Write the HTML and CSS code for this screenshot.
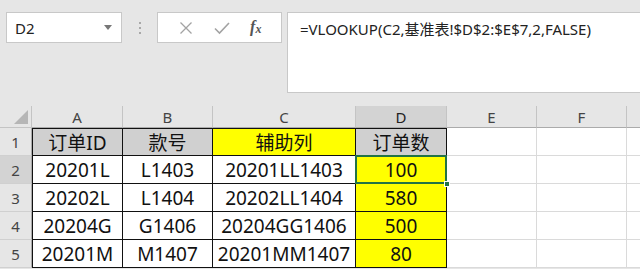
FILE: index.html
```html
<!DOCTYPE html>
<html lang="zh">
<head>
<meta charset="utf-8">
<link rel="stylesheet" href="styles.css">
</head>
<body>
<div class="toolbar">
  <div class="namebox"><span class="ref">D2</span><span class="caret"></span></div>
  <div class="dots"><span></span><span></span><span></span></div>
  <div class="buttons">
    <svg class="ic" width="16" height="16" viewBox="0 0 16 16"><path d="M2.5 2.5 L13.5 13.5 M13.5 2.5 L2.5 13.5" stroke="#a3a3a3" stroke-width="1.3" fill="none"/></svg>
    <svg class="ic" width="18" height="16" viewBox="0 0 18 16"><path d="M2 8.5 L6.5 13 L16 3" stroke="#a3a3a3" stroke-width="1.6" fill="none"/></svg>
    <span class="fx">f<sub>x</sub></span>
  </div>
  <div class="formula">=VLOOKUP(C2,基准表!$D$2:$E$7,2,FALSE)</div>
</div>
<div class="sheet">
  <div class="corner"><span class="tri"></span></div>
  <div class="ch">A</div><div class="ch">B</div><div class="ch">C</div><div class="ch sel">D</div><div class="ch">E</div><div class="ch">F</div><div class="ch last"></div>

  <div class="rh">1</div>
  <div class="c t top left gray">订单ID</div><div class="c t top gray">款号</div><div class="c t top yel">辅助列</div><div class="c t top gray">订单数</div><div class="c"></div><div class="c"></div><div class="c last"></div>

  <div class="rh selr">2</div>
  <div class="c t left">20201L</div><div class="c t">L1403</div><div class="c t">20201LL1403</div><div class="c t yel active">100<span class="frame"></span><span class="handle"></span></div><div class="c"></div><div class="c"></div><div class="c last"></div>

  <div class="rh">3</div>
  <div class="c t left">20202L</div><div class="c t">L1404</div><div class="c t">20202LL1404</div><div class="c t yel">580</div><div class="c"></div><div class="c"></div><div class="c last"></div>

  <div class="rh">4</div>
  <div class="c t left">20204G</div><div class="c t">G1406</div><div class="c t">20204GG1406</div><div class="c t yel">500</div><div class="c"></div><div class="c"></div><div class="c last"></div>

  <div class="rh">5</div>
  <div class="c t left">20201M</div><div class="c t">M1407</div><div class="c t">20201MM1407</div><div class="c t yel">80</div><div class="c"></div><div class="c"></div><div class="c last"></div>
</div>
</body>
</html>
```

FILE: styles.css
```css
* { box-sizing: border-box; }
html, body { margin: 0; padding: 0; }
body {
  width: 640px;
  height: 269px;
  overflow: hidden;
  background: #e6e6e6;
  font-family: "Noto Sans", "Noto Sans CJK SC", sans-serif;
}
.toolbar {
  height: 106px;
  display: flex;
  align-items: flex-start;
  padding: 12px 0 0 6px;
}
.namebox {
  width: 116px;
  height: 31px;
  background: #fff;
  border: 1px solid #c8c8c8;
  display: flex;
  align-items: center;
  justify-content: space-between;
  padding: 0 8px 0 8px;
}
.ref { font-size: 15px; color: #222; }
.caret {
  width: 0; height: 0;
  border-left: 4px solid transparent;
  border-right: 4px solid transparent;
  border-top: 5px solid #777;
  margin-right: 1px;
}
.dots {
  width: 35px;
  height: 31px;
  display: flex;
  flex-direction: column;
  align-items: center;
  justify-content: center;
  gap: 3px;
}
.dots span { width: 2px; height: 2px; background: #a8a8a8; }
.buttons {
  width: 125px;
  height: 31px;
  background: #fff;
  border: 1px solid #c8c8c8;
  display: flex;
  align-items: center;
  justify-content: space-around;
  padding: 0 10px;
}
.fx {
  font-family: "Liberation Serif", serif;
  font-style: italic;
  font-weight: bold;
  font-size: 16px;
  color: #555;
}
.fx sub { font-size: 12px; vertical-align: -1px; }
.formula {
  flex: 1;
  height: 81px;
  margin-left: 5px;
  background: #fff;
  border: 1px solid #c8c8c8;
  border-right: none;
  padding: 5px 0 0 12px;
  font-size: 15px;
  color: #222;
}
.sheet {
  display: grid;
  grid-template-columns: 32px 91px 90px 143px 91px 90px 90px 13px;
  grid-template-rows: 22px 28px 28px 28px 28px 28px;
  background: #fff;
}
.corner, .ch, .rh {
  background: #e6e6e6;
  color: #444;
  font-size: 15px;
  display: flex;
  align-items: center;
  justify-content: center;
}
.corner { border-right: 1px solid #c4c4c4; border-bottom: 1px solid #c4c4c4; position: relative; }
.tri {
  position: absolute;
  right: 3px; bottom: 3px;
  width: 0; height: 0;
  border-left: 14px solid transparent;
  border-bottom: 14px solid #b6b6b6;
}
.ch { border-right: 1px solid #c4c4c4; border-bottom: 1px solid #ababab; }
.ch.sel { background: #d3d3d3; color: #222; }
.ch.last { border-right: none; }
.rh { border-right: 1px solid #ababab; border-bottom: 1px solid #d0d0d0; }
.rh.selr { background: #d3d3d3; }
.c {
  border-right: 1px solid #dadada;
  border-bottom: 1px solid #dadada;
  font-size: 19px;
  color: #111;
  display: flex;
  align-items: center;
  justify-content: center;
  position: relative;
}
.c.last { border-right: none; }
.c.t { border-right-color: #111; border-bottom-color: #111; }
.c.top { border-top: 1px solid #111; }
.c.left { border-left: 1px solid #111; }
.gray { background: #d0d0d0; }
.yel { background: #ffff00; }
.frame {
  position: absolute;
  left: -1px; top: -1px; right: -1px; bottom: -1px;
  border: 2px solid #217346;
  pointer-events: none;
}
.handle {
  position: absolute;
  right: -4px; bottom: -4px;
  width: 6px; height: 6px;
  background: #217346;
  border: 1px solid #fff;
  z-index: 2;
}
```
